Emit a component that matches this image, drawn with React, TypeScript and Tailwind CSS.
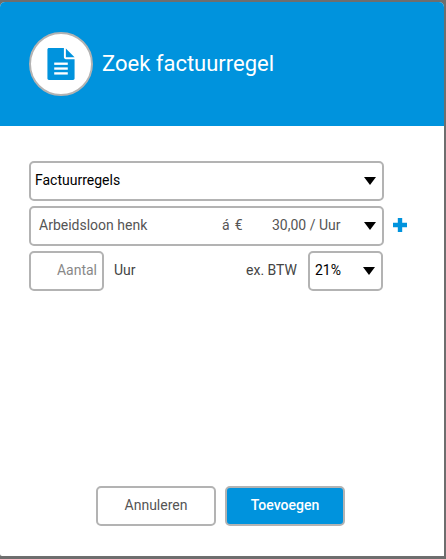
import React from "react";

const Arrow = () => (
  <svg width="12" height="8" viewBox="0 0 12 8" className="shrink-0">
    <polygon points="0,0 12,0 6,8" fill="#000" />
  </svg>
);

const DocIcon = () => (
  <svg width="28" height="32" viewBox="0 0 28 33" className="mb-[1px]">
    <path
      d="M1.5 0H17V9.5C17 10.6 17.9 11.5 19 11.5H28V31.5C28 32.3 27.3 33 26.5 33H1.5C.7 33 0 32.3 0 31.5V1.5C0 .7.7 0 1.5 0Z"
      fill="#0093dd"
    />
    <path d="M19 .5L28 9.5H19Z" fill="#0093dd" />
    <rect x="7" y="15" width="14" height="2.4" fill="#fff" />
    <rect x="7" y="20" width="14" height="2.4" fill="#fff" />
    <rect x="7" y="25" width="14" height="2.4" fill="#fff" />
  </svg>
);

export default function App() {
  return (
    <div className="h-[559px] w-[446px] bg-[#6e6e6e] pt-[2px] font-['Roboto',sans-serif]">
      <div className="flex h-[554px] w-[444px] flex-col overflow-hidden rounded-t-[5px] rounded-bl-[2px] bg-white">
        <div className="flex h-[124px] shrink-0 items-center gap-[9px] bg-[#0093dd] pl-[29px]">
          <div className="flex h-[64px] w-[64px] items-center justify-center rounded-full border-2 border-[#b3b3b3] bg-white">
            <DocIcon />
          </div>
          <h1 className="mb-[2px] text-[22px] text-white">Zoek factuurregel</h1>
        </div>

        <div className="flex flex-1 flex-col gap-[5px] pl-[29px] pt-[35px]">
          <div className="flex h-[40px] w-[355px] items-center justify-between rounded-[5px] border-2 border-[#b3b3b3] pl-[4px] pr-[6px] text-[14px] text-black">
            <span className="mb-[2px]">Factuurregels</span>
            <Arrow />
          </div>

          <div className="flex items-center">
            <div className="flex h-[40px] w-[355px] items-center rounded-[5px] border-2 border-[#b3b3b3] pl-[8px] pr-[6px] text-[14px] text-[#555]">
              <span className="mb-[2px] w-[183px]">Arbeidsloon henk</span>
              <span className="mb-[2px] flex w-[50px] gap-[5px]">
                <span>á</span>
                <span>€</span>
              </span>
              <span className="mb-[2px] w-[76px]">30,00 / Uur</span>
              <span className="ml-auto">
                <Arrow />
              </span>
            </div>
            <svg width="14" height="14" viewBox="0 0 14 14" className="mb-[2px] ml-[9px]">
              <path d="M4.8 0H9.2V4.8H14V9.2H9.2V14H4.8V9.2H0V4.8H4.8Z" fill="#0093dd" />
            </svg>
          </div>

          <div className="flex h-[40px] w-[354px] items-center text-[14px] text-[#444]">
            <div className="flex h-[40px] w-[75px] items-center justify-end rounded-[5px] border-2 border-[#b3b3b3] pb-[2px] pr-[5px] text-[#888]">
              Aantal
            </div>
            <span className="mb-[2px] ml-[10px]">Uur</span>
            <span className="mb-[2px] ml-auto">ex. BTW</span>
            <div className="ml-[11px] flex h-[40px] w-[75px] items-center justify-between rounded-[5px] border-2 border-[#b3b3b3] pl-[5px] pr-[6px] text-black">
              <span className="mb-[2px]">21%</span>
              <Arrow />
            </div>
          </div>
        </div>

        <div className="flex justify-start gap-[9px] pb-[30px] pl-[96px]">
          <button className="h-[40px] w-[120px] rounded-[5px] border-2 border-[#b3b3b3] bg-white pb-[2px] text-[14px] text-[#555]">
            Annuleren
          </button>
          <button className="h-[40px] w-[120px] rounded-[5px] border-2 border-[#b3b3b3] bg-[#0093dd] pb-[2px] text-[14px] font-medium text-white">
            Toevoegen
          </button>
        </div>
      </div>
    </div>
  );
}
